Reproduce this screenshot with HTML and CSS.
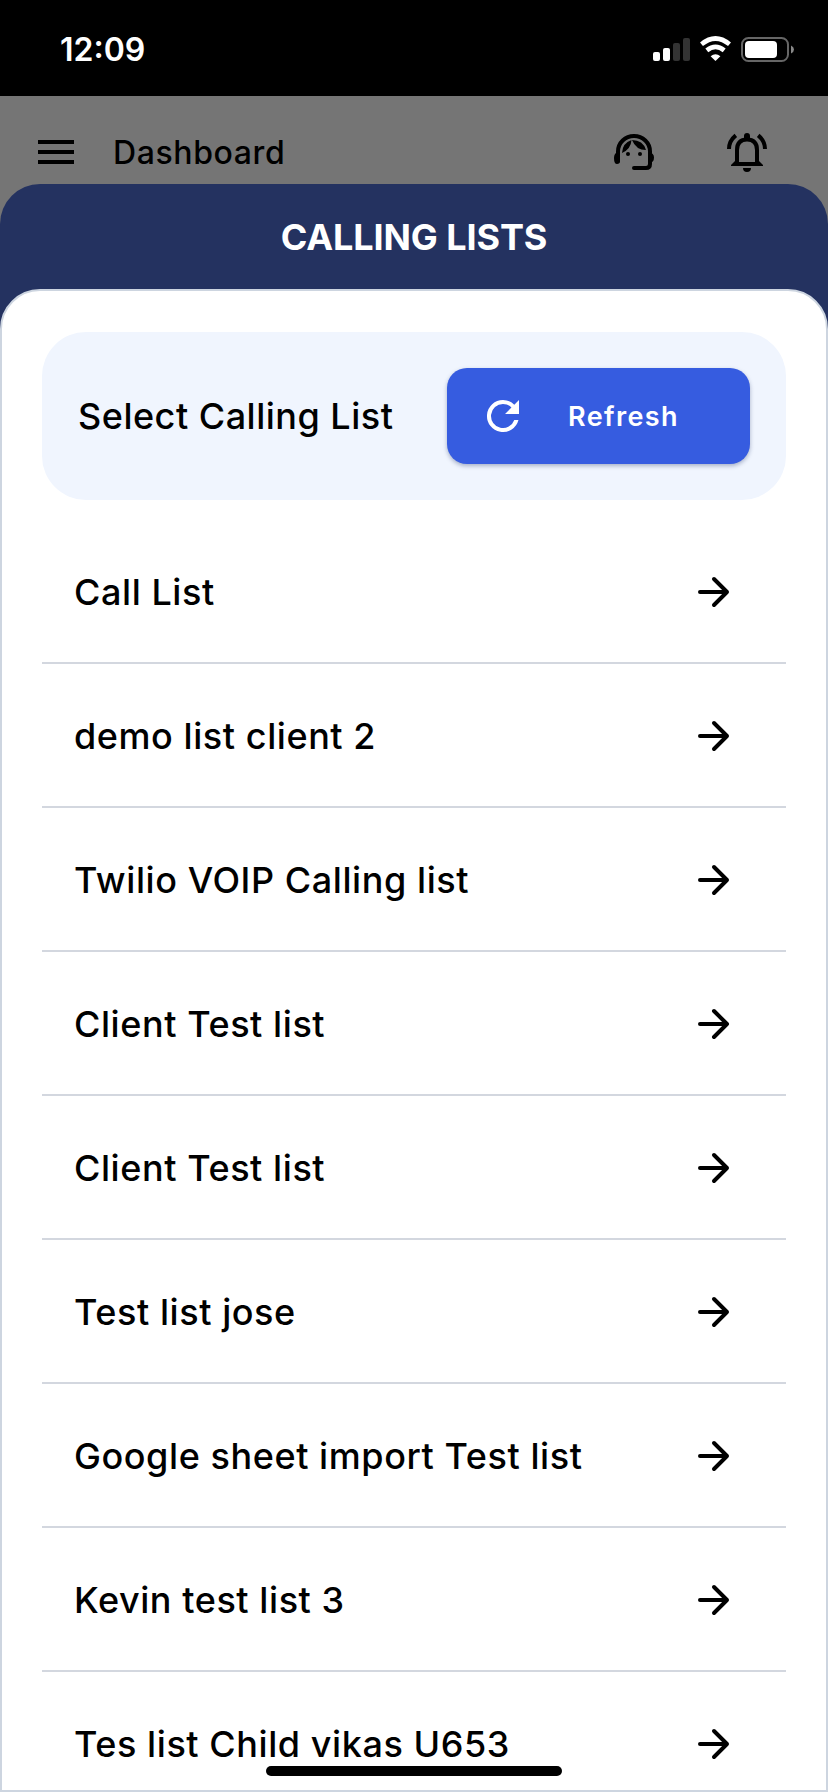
FILE: index.html
```html
<!DOCTYPE html>
<html lang="en">
<head>
    <meta charset="UTF-8">
    <meta name="viewport" content="width=device-width, initial-scale=1.0">
    <title>Calling Lists</title>
    <link rel="stylesheet" href="styles.css">
</head>
<body>
    <div class="phone">
      <div class="status-bar">
        <span class="time">12:09</span>
        <svg class="status-icons" width="144" height="28" viewBox="0 0 144 28">
          <g fill="#fff">
            <rect x="0" y="16" width="7" height="9" rx="2"/>
            <rect x="10" y="12" width="7" height="13" rx="2"/>
            <rect x="20" y="7" width="7" height="18" rx="2" fill="#333"/>
            <rect x="30" y="2" width="7" height="23" rx="2" fill="#333"/>
            <path d="M62.500 25L57.600 20.200Q62.500 16.200 67.400 20.200Z"/>
          </g>
          <path d="M48.500 8.300Q62.500 -3.300 76.500 8.300M53.800 14.400Q62.500 7.300 71.200 14.400" fill="none" stroke="#fff" stroke-width="4.600"/>
          <rect x="89" y="2" width="46" height="23" rx="6.500" fill="none" stroke="#666" stroke-width="2"/>
          <rect x="92" y="5" width="32" height="17" rx="4" fill="#fff"/>
          <path d="M138 9.500Q141 11 141 13.500Q141 16 138 17.500Z" fill="#888"/>
        </svg>
      </div>
      <div class="app-bar">
        <svg class="menu-icon" width="48" height="48" viewBox="0 0 24 24">
          <path d="M3 18h18v-2H3v2zm0-5h18v-2H3v2zm0-7v2h18V6H3z"/>
        </svg>
        <span class="page-name">Dashboard</span>
        <svg class="agent-icon" width="44" height="44" viewBox="0 0 44 44">
          <path d="M6 31V21.500A16 15.500 0 0 1 38 21.500V34Q38 38 34 38H22" fill="none" stroke="#000" stroke-width="4" stroke-linecap="round"/>
          <path d="M6 22Q2 23 2 28Q2 34 5 34Q8 34 8 31V22ZM37 22Q42 23 42 27.500Q42 32 38 33Z"/>
          <path d="M10 23Q10.500 13 19.500 10Q19 19 10 23ZM20 10Q31 10 34 20Q24 20 20 10Z"/>
          <circle cx="16" cy="24" r="2"/>
          <circle cx="28" cy="24" r="2"/>
        </svg>
        <svg class="bell-icon" width="44" height="44" viewBox="0 0 44 44">
          <path d="M12 34V20Q12 9.500 22 9.500Q32 9.500 32 20V34" fill="none" stroke="#000" stroke-width="4"/>
          <path d="M19 9V6Q19 3 22 3Q25 3 25 6V9ZM6 36V35L10 31V32H34V31L38 35V36ZM18 38H26Q26 42 22 42Q18 42 18 38Z"/>
          <path d="M4 19Q4 11 10.800 5.400M40 19Q40 11 33.200 5.400" fill="none" stroke="#000" stroke-width="4"/>
        </svg>
      </div>
      <div class="sheet">
        <h1 class="sheet-title">CALLING LISTS</h1>
        <div class="sheet-body">
          <div class="select-card">
            <span class="select-label">Select Calling List</span>
            <button class="refresh">
              <svg width="48" height="48" viewBox="0 0 24 24">
                <path d="M17.650 6.350A7.960 7.960 0 0 0 12 4a8 8 0 1 0 7.730 10h-2.080A6 6 0 1 1 12 6c1.660 0 3.140.690 4.220 1.780L13 11h7V4z" fill="#fff"/>
              </svg>
              <span>Refresh</span>
            </button>
          </div>
          <ul class="lists">
            <li>Call List <svg class="arrow"><use href="#arrow"/></svg></li>
            <li>demo list client 2 <svg class="arrow"><use href="#arrow"/></svg></li>
            <li>Twilio VOIP Calling list <svg class="arrow"><use href="#arrow"/></svg></li>
            <li>Client Test list <svg class="arrow"><use href="#arrow"/></svg></li>
            <li>Client Test list <svg class="arrow"><use href="#arrow"/></svg></li>
            <li>Test list jose <svg class="arrow"><use href="#arrow"/></svg></li>
            <li>Google sheet import Test list <svg class="arrow"><use href="#arrow"/></svg></li>
            <li>Kevin test list 3 <svg class="arrow"><use href="#arrow"/></svg></li>
            <li>Tes list Child vikas U653 <svg class="arrow"><use href="#arrow"/></svg></li>
          </ul>
        </div>
      </div>
      <div class="home-indicator"></div>
    </div>

    <!-- shared row arrow -->
    <svg class="symbols" width="0" height="0">
      <symbol id="arrow" viewBox="0 0 32 32">
        <path d="M2 16H29M16 3L29 16L16 29" fill="none" stroke="#000" stroke-width="4" stroke-linecap="round" stroke-linejoin="round"/>
      </symbol>
    </svg>
</body>
</html>
```
FILE: styles.css
```css
* {
    box-sizing: border-box;
}

body {
    margin: 0;
    font-family: Inter, "Liberation Sans", sans-serif;
    color: #000;
}

.phone {
    position: relative;
    display: flex;
    flex-direction: column;
    width: 828px;
    height: 1792px;
    overflow: hidden;
    background-color: #757575;
}

.status-bar {
    display: flex;
    justify-content: space-between;
    align-items: center;
    height: 96px;
    padding: 3px 31px 0 60px;
    background-color: #000;
}

.time {
    color: #fff;
    font-size: 32px;
    font-weight: 600;
}

.app-bar {
    display: flex;
    align-items: center;
    height: 88px;
    padding: 24px 59px 0 32px;
}

.page-name {
    flex: 1;
    margin-left: 33px;
    font-size: 32px;
    font-weight: 550;
    letter-spacing: 0.6px;
}

.bell-icon {
    margin-left: 69px;
}

.sheet {
    display: flex;
    flex: 1;
    flex-direction: column;
    border-radius: 40px 40px 0 0;
    /* navy only behind the title, so the body edges stay light */
    background: linear-gradient(#243260 150px, #fff 150px);
}

.sheet-title {
    margin: 0;
    height: 105px;
    line-height: 106px;
    color: #fff;
    font-size: 36px;
    font-weight: 650;
    letter-spacing: -0.1px;
    text-align: center;
}

.sheet-body {
    flex: 1;
    padding: 41px 40px 0;
    border: 2px solid #cdd5e0;
    border-radius: 40px 40px 0 0;
    background-color: #fff;
}

.select-card {
    display: flex;
    justify-content: space-between;
    align-items: center;
    height: 168px;
    padding: 0 36px;
    border-radius: 44px;
    background-color: #f0f5fe;
}

.select-label {
    font-size: 36px;
    font-weight: 550;
    letter-spacing: 0.5px;
}

.refresh {
    display: flex;
    align-items: center;
    gap: 41px;
    width: 303px;
    height: 96px;
    padding: 0 0 0 32px;
    border: none;
    border-radius: 20px;
    background-color: #365ce0;
    box-shadow: 0 2px 4px rgba(30, 50, 100, 0.35);
    color: #fff;
    font-family: inherit;
    font-size: 27px;
    font-weight: 600;
    letter-spacing: 1.4px;
}

.lists {
    margin: 20px 0 0;
    padding: 0;
    list-style: none;
}

.lists li {
    display: flex;
    justify-content: space-between;
    align-items: center;
    height: 144px;
    padding: 2px 56px 0 32px;
    border-bottom: 2px solid #d3d7df;
    font-size: 36px;
    font-weight: 550;
    letter-spacing: 0.57px;
}

/* cut off by the bottom of the screen */
.lists li:last-child {
    height: 118px;
    padding-top: 26px;
    border-bottom: none;
}

.arrow {
    width: 32px;
    height: 32px;
}

.home-indicator {
    position: absolute;
    left: 266px;
    bottom: 16px;
    width: 296px;
    height: 10px;
    border-radius: 5px;
    background-color: #000;
}

.symbols {
    position: absolute;
}
```
